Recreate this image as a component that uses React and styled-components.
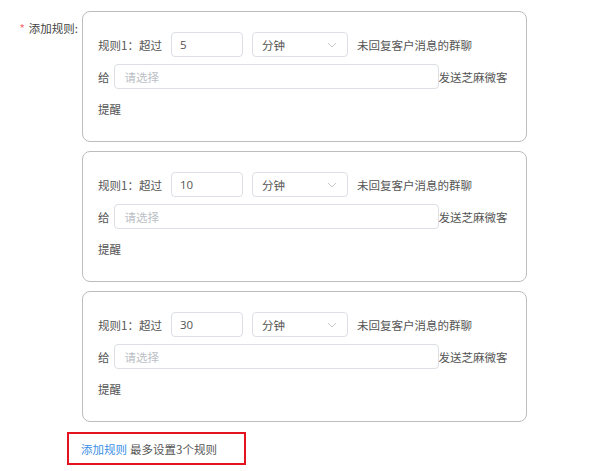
import React from 'react'
import styled, { createGlobalStyle } from 'styled-components'

const GlobalStyle = createGlobalStyle`
  body {
    margin: 0;
    background: #fff;
    font-family: "Noto Sans CJK SC", "Noto Sans", sans-serif;
    font-size: 11.5px;
    color: #555;
  }
`

const Page = styled.div`
  width: 600px;
  height: 471px;
  padding-top: 11px;
  box-sizing: border-box;
  display: flex;
`

const Label = styled.div`
  width: 82px;
  flex: none;
  box-sizing: border-box;
  padding: 7px 4px 0 0;
  text-align: right;
  line-height: 20px;
  color: #444;

  &:before {
    content: '*';
    color: #f56c6c;
    margin-right: 4px;
  }
`

const Content = styled.div`
  width: 445px;
  display: flex;
  flex-direction: column;
  gap: 9px;
`

const Card = styled.div`
  height: 131px;
  box-sizing: border-box;
  border: 1px solid #bdbdbd;
  border-radius: 8px;
  padding: 20px 15px 0;
  display: flex;
  flex-direction: column;
`

const Row = styled.div`
  display: flex;
  align-items: center;
  height: 25px;
  margin-top: ${p => p.$top || 0}px;
  gap: ${p => p.$gap || 0}px;
`

const Text = styled.span`
  white-space: nowrap;
  color: #555;
`

const Input = styled.div`
  box-sizing: border-box;
  width: ${p => p.$w}px;
  height: 25px;
  margin-left: ${p => p.$ml || 0}px;
  border: 1px solid #dcdfe6;
  border-radius: 4px;
  padding-left: ${p => p.$pad || 8}px;
  display: flex;
  align-items: center;
  justify-content: space-between;
  padding-right: 10px;
  color: ${p => (p.$placeholder ? '#bbbfc6' : '#555')};
  font-family: ${p => (p.$num ? '"Open Sans", "Noto Sans", sans-serif' : 'inherit')};
`

const Chevron = () => (
  <svg width="10" height="6" viewBox="0 0 10 6">
    <path d="M1 1 L5 5 L9 1" fill="none" stroke="#c8c8c8" strokeWidth="1" />
  </svg>
)

const Footer = styled.div`
  margin: 1px 0 0 -15px;
  width: 179px;
  height: 33px;
  box-sizing: border-box;
  border: 2px solid #e3141f;
  padding-left: 12px;
  display: flex;
  align-items: center;
  gap: 3px;
`

const Link = styled.span`
  color: #3a8ee6;
`

const Tip = styled.span`
  color: #555;
`

const rules = ['5', '10', '30']

export default function App() {
  return (
    <>
      <GlobalStyle />
      <Page>
        <Label>添加规则:</Label>
        <Content>
          {rules.map(v => (
            <Card key={v}>
              <Row $gap={9}>
                <Text>规则1：超过</Text>
                <Input $w={72} $num>{v}</Input>
                <Input $w={96} $pad={9}>
                  分钟
                  <Chevron />
                </Input>
                <Text>未回复客户消息的群聊</Text>
              </Row>
              <Row $top={7}>
                <Text>给</Text>
                <Input $w={325} $pad={10} $ml={4} $placeholder>
                  请选择
                </Input>
                <Text>发送芝麻微客</Text>
              </Row>
              <Row $top={7}>
                <Text>提醒</Text>
              </Row>
            </Card>
          ))}
          <Footer>
            <Link>添加规则</Link>
            <Tip>最多设置3个规则</Tip>
          </Footer>
        </Content>
      </Page>
    </>
  )
}
